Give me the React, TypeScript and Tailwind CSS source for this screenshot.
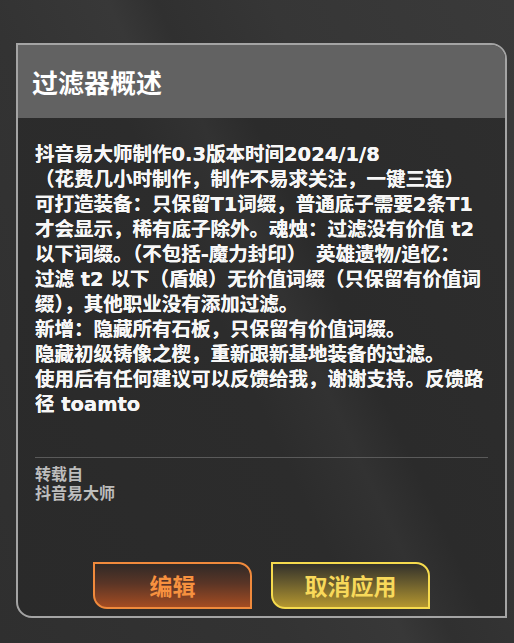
import React from "react";

const lines = [
  "抖音易大师制作0.3版本时间2024/1/8",
  "（花费几小时制作，制作不易求关注，一键三连）",
  "可打造装备：只保留T1词缀，普通底子需要2条T1",
  "才会显示，稀有底子除外。魂烛：过滤没有价值 t2",
  "以下词缀。（不包括-魔力封印）　英雄遗物/追忆：",
  "过滤 t2 以下（盾娘）无价值词缀（只保留有价值词",
  "缀），其他职业没有添加过滤。",
  "新增：隐藏所有石板，只保留有价值词缀。",
  "隐藏初级铸像之楔，重新跟新基地装备的过滤。",
  "使用后有任何建议可以反馈给我，谢谢支持。反馈路",
  "径 toamto",
];

export default function App() {
  return (
    <div
      className="w-[514px] h-[643px] overflow-hidden pt-[43px] pl-[16px] bg-[linear-gradient(65deg,#2f2f2f_0%,#333333_35%,#383838_50%,#303030_56%,#363636_70%,#3a3a3a_100%)]"
      style={{ fontFamily: '"Noto Sans CJK SC", "Noto Sans", sans-serif' }}
    >
      <div className="w-[491px] h-[575px] border-2 border-[#a4a4a4] rounded-tr-[16px] rounded-bl-[16px] overflow-hidden flex flex-col bg-[linear-gradient(65deg,#2a2a2a_0%,#2c2c2c_45%,#323232_55%,#2b2b2b_62%,#2e2e2e_100%)]">
        <div className="h-[73px] shrink-0 bg-[#626262] flex items-center pl-[14px]">
          <span className="text-[26px] font-bold text-white leading-none">过滤器概述</span>
        </div>
        <div className="flex flex-col flex-1 px-[17px] pt-[24px] pb-[7px]">
          <div
            className="text-[19.5px] leading-[25px] font-bold text-[#f7f7f7] whitespace-pre [text-shadow:0_0_0.6px_#ffffff]"
            style={{ fontFamily: '"DejaVu Sans", "Noto Sans CJK SC", sans-serif' }}
          >
            {lines.map((l, i) => (
              <div key={i}>{l}</div>
            ))}
          </div>
          <div className="mt-[40px] h-px bg-[#5a5a5a]" />
          <div className="mt-[6px] text-[16px] leading-[19px] font-bold text-[#bdbdbd]">
            <div>转载自</div>
            <div>抖音易大师</div>
          </div>
          <div className="mt-auto flex justify-center gap-[19px]">
            <button className="w-[159px] h-[47px] border-2 border-[#f08a3c] rounded-tr-[14px] rounded-bl-[14px] bg-[linear-gradient(180deg,#302a27_0%,#5a3526_45%,#a44c22_100%)] flex items-center justify-center">
              <span className="text-[23px] font-bold text-[#f7913f] leading-none">编辑</span>
            </button>
            <button className="w-[159px] h-[47px] border-2 border-[#f6db4e] rounded-tr-[14px] rounded-bl-[14px] bg-[linear-gradient(180deg,#33312b_0%,#6b5e2e_45%,#b4962f_100%)] flex items-center justify-center">
              <span className="text-[23px] font-bold text-[#f8d95a] leading-none">取消应用</span>
            </button>
          </div>
        </div>
      </div>
    </div>
  );
}
